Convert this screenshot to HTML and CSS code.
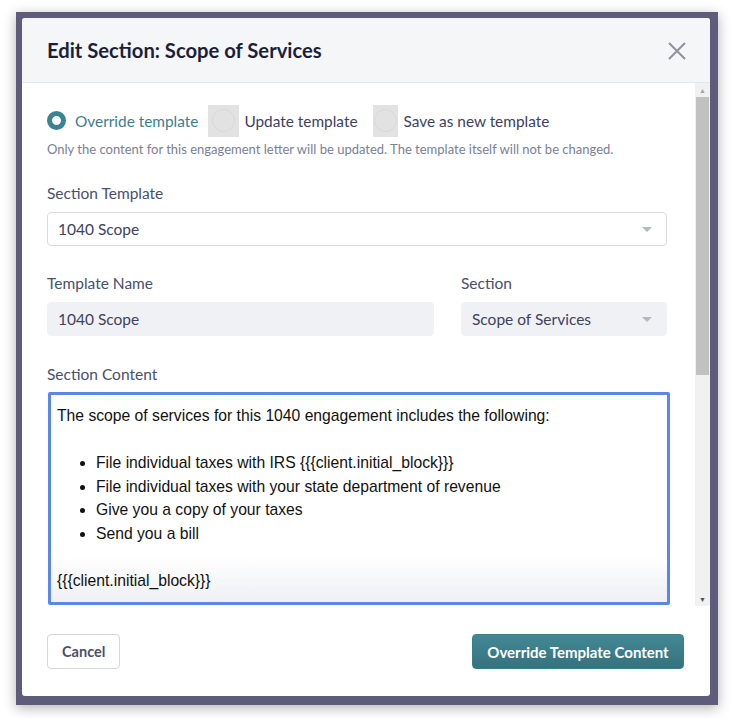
FILE: index.html
```html
<!DOCTYPE html>
<html>

<head>
    <title>Edit Section</title>
    <link rel="stylesheet" href="styles.css">
</head>

<body>
    <div class="backdrop">
        <div class="modal">
            <div class="modal-header">
                <h2>Edit Section: Scope of Services</h2>
                <svg class="close" width="20" height="20" viewBox="0 0 20 20">
                    <path d="M2 2 L18 18 M18 2 L2 18" stroke="#8e91a0" stroke-width="2" fill="none" />
                </svg>
            </div>

            <div class="modal-body">
                <div class="body-inner">
                    <div class="mode-row">
                        <span class="radio checked"></span>
                        <span class="mode-label active">Override template</span>
                        <span class="radio-box"><span class="ring"></span></span>
                        <span class="mode-label">Update template</span>
                        <span class="radio-box narrow"><span class="ring"></span></span>
                        <span class="mode-label">Save as new template</span>
                    </div>
                    <p class="help">Only the content for this engagement letter will be updated. The template itself will not be changed.</p>

                    <div class="field">
                        <label>Section Template</label>
                        <div class="select">1040 Scope<span class="caret"></span></div>
                    </div>

                    <div class="field-row">
                        <div class="field grow">
                            <label>Template Name</label>
                            <div class="input disabled">1040 Scope</div>
                        </div>
                        <div class="field side">
                            <label>Section</label>
                            <div class="select disabled">Scope of Services<span class="caret"></span></div>
                        </div>
                    </div>

                    <div class="field">
                        <label>Section Content</label>
                        <div class="editor">
                            <div class="line">The scope of services for this 1040 engagement includes the following:</div>
                            <div class="line">&nbsp;</div>
                            <ul>
                                <li>File individual taxes with IRS {{{client.initial_block}}}</li>
                                <li>File individual taxes with your state department of revenue</li>
                                <li>Give you a copy of your taxes</li>
                                <li>Send you a bill</li>
                            </ul>
                            <div class="line">&nbsp;</div>
                            <div class="line">{{{client.initial_block}}}</div>
                        </div>
                    </div>
                </div>

                <!-- fake scrollbar for the body -->
                <div class="scrollbar">
                    <span class="arrow">&#9650;</span>
                    <div class="track"><div class="thumb"></div></div>
                    <span class="arrow">&#9660;</span>
                </div>
            </div>

            <div class="modal-footer">
                <button class="btn">Cancel</button>
                <button class="btn primary">Override Template Content</button>
            </div>
        </div>
    </div>
</body>

</html>
```
FILE: styles.css
```css
html,
body {
    margin: 0;
    padding: 0;
    background: #fff;
    font-family: Lato, "Open Sans", sans-serif;
}

body {
    padding: 12px 18px 13px 16px;
}

.backdrop {
    width: 702px;
    height: 693px;
    background: #5f5b7b;
    padding: 6px 8px 9px 6px;
    box-sizing: border-box;
    box-shadow: 0 3px 12px rgba(0, 0, 0, 0.3);
}

.modal {
    background: #fff;
    border-radius: 3px;
    height: 678px;
    display: flex;
    flex-direction: column;
    overflow: hidden;
}

/* header */
.modal-header {
    height: 64px;
    background: #f5f6f8;
    border-bottom: 1px solid #e3e5ea;
    display: flex;
    align-items: center;
    justify-content: space-between;
    padding: 0 23px 0 25px;
    flex-shrink: 0;
}

.modal-header h2 {
    margin: 0;
    font-size: 20.2px;
    font-weight: 700;
    color: #1b1f3b;
}

.close {
    margin-top: 1px;
}

/* body */
.modal-body {
    height: 523px;
    display: flex;
    flex-shrink: 0;
    overflow: hidden;
}

.body-inner {
    flex: 1;
    padding: 22px 28px 0 25px;
    overflow: hidden;
}

.mode-row {
    display: flex;
    align-items: center;
    height: 31px;
}

.radio {
    width: 19px;
    height: 19px;
    box-sizing: border-box;
    border-radius: 50%;
    border: 5px solid #3a8492;
    margin-right: 9px;
}

.mode-label {
    font-size: 15.4px;
    color: #3d4260;
}

.mode-label.active {
    color: #3c7f8c;
}

.radio-box {
    width: 31px;
    height: 32px;
    background: #e2e2e3;
    display: flex;
    align-items: center;
    justify-content: center;
    margin: 0 5px 0 10px;
}

.radio-box.narrow {
    width: 25px;
    margin: 0 6px 0 15px;
}

.ring {
    width: 21px;
    height: 21px;
    border-radius: 50%;
    border: 1px solid #d8d8da;
}

.help {
    margin: 5px 0 0;
    font-size: 13px;
    line-height: 16px;
    color: #7b8094;
}

.field {
    margin-top: 26px;
}

.field label {
    display: block;
    font-size: 15.5px;
    line-height: 20px;
    color: #4a4f6a;
    margin-bottom: 9px;
}

.field-row {
    display: flex;
    gap: 27px;
}

.field.grow {
    flex: 1;
}

.field.side {
    width: 206px;
}

.field-row .field {
    margin-top: 27px;
}

.field-row + .field {
    margin-top: 28px;
}

.select,
.input {
    height: 34px;
    box-sizing: border-box;
    border: 1px solid #d8dbe2;
    border-radius: 4px;
    padding: 0 10px;
    display: flex;
    align-items: center;
    justify-content: space-between;
    font-size: 15.5px;
    color: #3d4260;
}

.select.disabled,
.input.disabled {
    background: #f0f1f4;
    border-color: #f0f1f4;
}

.caret {
    width: 0;
    height: 0;
    border-left: 5px solid transparent;
    border-right: 5px solid transparent;
    border-top: 5px solid #b5b8c3;
    margin-right: 4px;
}

/* rich text area, fades to grey at the bottom */
.editor {
    width: 622px;
    margin: -1px 0 0 1px;
    height: 213px;
    box-sizing: border-box;
    border: 3px solid #5b88e8;
    border-radius: 2px;
    padding: 9px 6px 0;
    font-family: "Liberation Sans", Arial, sans-serif;
    font-size: 15.7px;
    line-height: 23.6px;
    color: #111;
    background: linear-gradient(#fff 0, #fff 160px, #eef0f3 100%);
    overflow: hidden;
}

.editor ul {
    margin: 0;
    padding-left: 39px;
}

.scrollbar {
    width: 15px;
    background: #f1f1f1;
    display: flex;
    flex-direction: column;
    align-items: center;
    flex-shrink: 0;
}

.arrow {
    font-size: 7px;
    line-height: 14px;
    height: 14px;
    color: #a3a3a3;
}

.arrow:last-child {
    color: #505050;
}

.track {
    flex: 1;
    width: 100%;
}

.thumb {
    width: 13px;
    margin: 0 auto;
    height: 278px;
    background: #c1c1c1;
}

/* footer */
.modal-footer {
    flex: 1;
    display: flex;
    justify-content: space-between;
    align-items: flex-start;
    padding: 28px 26px 0 25px;
}

.btn {
    height: 35px;
    padding: 0 14px;
    background: #fff;
    border: 1px solid #d4d6de;
    border-radius: 4px;
    font-family: Lato, "Open Sans", sans-serif;
    font-size: 14.5px;
    font-weight: 700;
    color: #4a4f6a;
}

.btn.primary {
    width: 212px;
    background: linear-gradient(#418995, #35727d);
    border-color: #3a7d88;
    color: #fff;
    font-size: 15px;
}
```
